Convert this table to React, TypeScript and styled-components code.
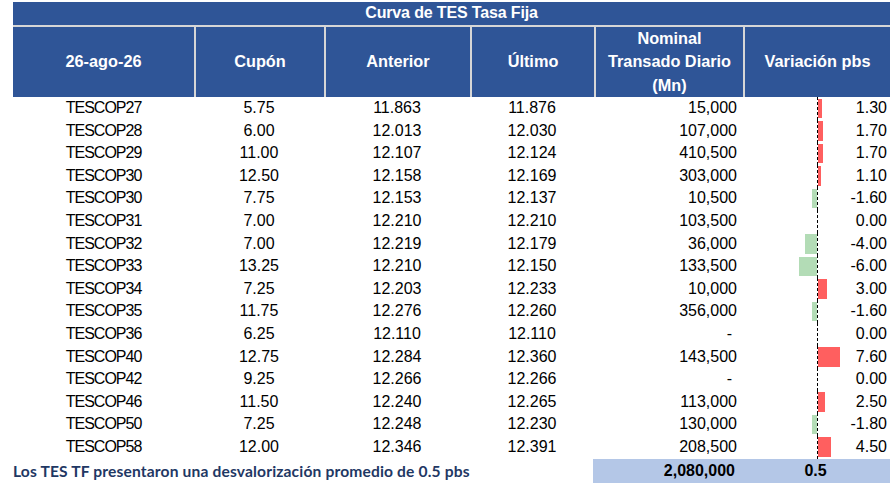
import React from 'react'
import styled, { createGlobalStyle } from 'styled-components'

const GlobalStyle = createGlobalStyle`
  html, body {
    margin: 0;
    padding: 0;
    background: #fff;
  }
  body {
    font-family: 'Liberation Sans', Arial, sans-serif;
  }
`

const COLS = '181px 130px 146px 124px 149px 147px'
const ZERO = 74
const PX_PER_PB = 2.95

const Sheet = styled.div`
  padding: 2px 6px 0 13px;
  width: 877px;
`

const Title = styled.div`
  height: 22.5px;
  line-height: 22.5px;
  background: #2f5597;
  color: #fff;
  font-weight: bold;
  font-size: 16px;
  letter-spacing: -0.15px;
  text-align: center;
  border-bottom: 2px solid #d6d6d6;
`

const HeaderRow = styled.div`
  display: grid;
  grid-template-columns: ${COLS};
  height: 70.5px;
  background: #2f5597;
`

const HeaderCell = styled.div`
  display: flex;
  align-items: center;
  justify-content: center;
  text-align: center;
  color: #fff;
  font-weight: bold;
  font-size: 16.3px;
  line-height: 23.5px;
  & + & {
    border-left: 2px solid #d6d6d6;
  }
`

const Row = styled.div`
  display: grid;
  grid-template-columns: ${COLS};
  height: 22.6px;
  font-size: 16px;
  line-height: 22.6px;
  color: #000;
`

const Cell = styled.div<{ $align?: 'center' | 'right'; $pad?: number; $tight?: boolean }>`
  text-align: ${(p) => p.$align ?? 'center'};
  padding-right: ${(p) => p.$pad ?? 0}px;
  letter-spacing: ${(p) => (p.$tight ? '-1px' : 'normal')};
  white-space: nowrap;
`

const VarCell = styled.div`
  display: grid;
  grid-template-columns: ${ZERO}px 1px 1fr;
  padding-right: 3px;
`

const ZeroLine = styled.div`
  grid-column: 2;
  grid-row: 1;
  background: repeating-linear-gradient(to bottom, #000 0 3px, transparent 3px 5px);
`

const Bar = styled.div<{ $neg: boolean }>`
  grid-row: 1;
  grid-column: ${(p) => (p.$neg ? 1 : 3)};
  justify-self: ${(p) => (p.$neg ? 'end' : 'start')};
  margin: 1.5px 0;
  background: ${(p) => (p.$neg ? '#b3dcb6' : '#ff5f5f')};
`

const VarValue = styled.div`
  grid-row: 1;
  grid-column: 3;
  justify-self: end;
`

const Footer = styled.div`
  display: grid;
  grid-template-columns: 580px 148px 149px;
  height: 24px;
  line-height: 24px;
  margin-left: -13px;
  padding-left: 13px;
`

const Note = styled.div`
  font-family: Lato, 'Open Sans', sans-serif;
  font-weight: bold;
  font-size: 15.6px;
  letter-spacing: 0.15px;
  color: #1f3864;
  white-space: nowrap;
`

const Total = styled.div<{ $align: 'center' | 'right'; $pad?: number }>`
  background: #b4c7e7;
  font-weight: bold;
  font-size: 16px;
  color: #000;
  text-align: ${(p) => p.$align};
  padding-right: ${(p) => p.$pad ?? 0}px;
`

type Bond = [string, string, string, string, string, number]

const bonds: Bond[] = [
  ['TESCOP27', '5.75', '11.863', '11.876', '15,000', 1.3],
  ['TESCOP28', '6.00', '12.013', '12.030', '107,000', 1.7],
  ['TESCOP29', '11.00', '12.107', '12.124', '410,500', 1.7],
  ['TESCOP30', '12.50', '12.158', '12.169', '303,000', 1.1],
  ['TESCOP30', '7.75', '12.153', '12.137', '10,500', -1.6],
  ['TESCOP31', '7.00', '12.210', '12.210', '103,500', 0],
  ['TESCOP32', '7.00', '12.219', '12.179', '36,000', -4],
  ['TESCOP33', '13.25', '12.210', '12.150', '133,500', -6],
  ['TESCOP34', '7.25', '12.203', '12.233', '10,000', 3],
  ['TESCOP35', '11.75', '12.276', '12.260', '356,000', -1.6],
  ['TESCOP36', '6.25', '12.110', '12.110', '-', 0],
  ['TESCOP40', '12.75', '12.284', '12.360', '143,500', 7.6],
  ['TESCOP42', '9.25', '12.266', '12.266', '-', 0],
  ['TESCOP46', '11.50', '12.240', '12.265', '113,000', 2.5],
  ['TESCOP50', '7.25', '12.248', '12.230', '130,000', -1.8],
  ['TESCOP58', '12.00', '12.346', '12.391', '208,500', 4.5],
]

export default function App() {
  return (
    <>
      <GlobalStyle />
      <Sheet>
        <Title>Curva de TES Tasa Fija</Title>
        <HeaderRow>
          <HeaderCell>26-ago-26</HeaderCell>
          <HeaderCell>Cupón</HeaderCell>
          <HeaderCell>Anterior</HeaderCell>
          <HeaderCell>Último</HeaderCell>
          <HeaderCell>
            Nominal
            <br />
            Transado Diario
            <br />
            (Mn)
          </HeaderCell>
          <HeaderCell>Variación pbs</HeaderCell>
        </HeaderRow>
        {bonds.map(([name, cupon, anterior, ultimo, nominal, pbs], i) => (
          <Row key={i}>
            <Cell $tight>{name}</Cell>
            <Cell>{cupon}</Cell>
            <Cell>{anterior}</Cell>
            <Cell>{ultimo}</Cell>
            <Cell $align="right" $pad={nominal === '-' ? 11 : 6}>
              {nominal}
            </Cell>
            <VarCell>
              <ZeroLine />
              {pbs !== 0 && (
                <Bar $neg={pbs < 0} style={{ width: Math.abs(pbs) * PX_PER_PB }} />
              )}
              <VarValue>{pbs.toFixed(2)}</VarValue>
            </VarCell>
          </Row>
        ))}
        <Footer>
          <Note>Los TES TF presentaron una desvalorización promedio de 0.5 pbs</Note>
          <Total $align="right" $pad={6}>
            2,080,000
          </Total>
          <Total $align="center">0.5</Total>
        </Footer>
      </Sheet>
    </>
  )
}
